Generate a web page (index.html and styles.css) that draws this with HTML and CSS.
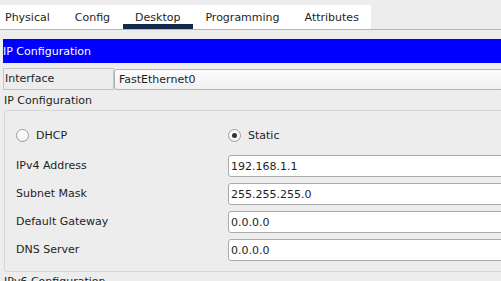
FILE: index.html
```html
<!DOCTYPE html>
<html lang="en">
<head>
    <meta charset="UTF-8">
    <title>IP Configuration</title>
    <link rel="stylesheet" href="styles.css">
</head>
<body>
    <div class="tabbar">
        <div class="tabs">
            <div class="tab">Physical</div>
            <div class="tab">Config</div>
            <div class="tab active">Desktop</div>
            <div class="tab">Programming</div>
            <div class="tab">Attributes</div>
        </div>
    </div>

    <div class="window">
        <div class="titlebar">IP Configuration</div>

        <div class="iface-row">
            <div class="iface-label">Interface</div>
            <div class="combo">FastEthernet0</div>
        </div>

        <div class="section-label">IP Configuration</div>
        <div class="groupbox">
            <div class="radio-cell"><span class="radio"></span>DHCP</div>
            <div class="radio-cell"><span class="radio checked"></span>Static</div>

            <div class="field-label">IPv4 Address</div>
            <div class="field">192.168.1.1</div>

            <div class="field-label">Subnet Mask</div>
            <div class="field">255.255.255.0</div>

            <div class="field-label">Default Gateway</div>
            <div class="field">0.0.0.0</div>

            <div class="field-label">DNS Server</div>
            <div class="field">0.0.0.0</div>
        </div>
        <div class="section-label v6">IPv6 Configuration</div>
    </div>
</body>
</html>
```

FILE: styles.css
```css
body {
    margin: 0;
    background-color: #ededed;
    color: #1e1e1e;
    font-family: "DejaVu Sans", sans-serif;
    font-size: 11px;
    overflow: hidden;
}
.tabbar {
    padding-top: 5px;
    border-bottom: 1px solid #b6b6b6;
}
.tabs {
    display: inline-flex;
    background-color: #fff;
    height: 24px;
}
.tab {
    padding: 1px 12.5px 0;
    line-height: 23px;
}
.tab:first-child {
    padding-left: 5px;
}
.tab.active {
    box-shadow: inset 0 -5px 0 #13294b;
}
.window {
    width: 580px;
    padding: 9px 0 0 3px;
}
.titlebar {
    background-color: #0000ff;
    color: #fff;
    height: 22px;
    padding-top: 2px;
    line-height: 22px;
}
.iface-row {
    display: flex;
    margin-top: 5px;
    height: 22px;
}
.iface-label {
    width: 108px;
    border: 1px solid #c6c6c6;
    padding-left: 1px;
    line-height: 20px;
}
.combo {
    flex: 1;
    margin-top: 1px;
    border: 1px solid #b2b2b2;
    border-radius: 3px;
    background: linear-gradient(#fdfdfd, #f0f0f0);
    padding-left: 4px;
    line-height: 19px;
}
.section-label {
    margin-top: 3px;
    padding-left: 1px;
    line-height: 16px;
}
.groupbox {
    display: grid;
    grid-template-columns: 212px 1fr;
    row-gap: 6px;
    margin: 1px 0 0 1px;
    padding: 13px 0 10px 11px;
    border: 1px solid #d6d6d6;
    border-radius: 3px;
}
.radio-cell {
    display: flex;
    align-items: center;
    height: 22px;
    margin-bottom: 3px;
}
.radio {
    width: 11px;
    height: 11px;
    border: 1px solid #9c9c9c;
    border-radius: 50%;
    background: linear-gradient(#ffffff, #f2f2f2);
    margin-right: 7px;
    display: flex;
    align-items: center;
    justify-content: center;
}
.radio.checked::after {
    content: "";
    width: 5px;
    height: 5px;
    border-radius: 50%;
    background-color: #333;
}
.field-label {
    line-height: 22px;
}
.field {
    height: 20px;
    line-height: 21px;
    border: 1px solid #aaaaaa;
    border-radius: 3px;
    background-color: #fff;
    padding-left: 2px;
}
.v6 {
    margin-top: 2px;
}
```
